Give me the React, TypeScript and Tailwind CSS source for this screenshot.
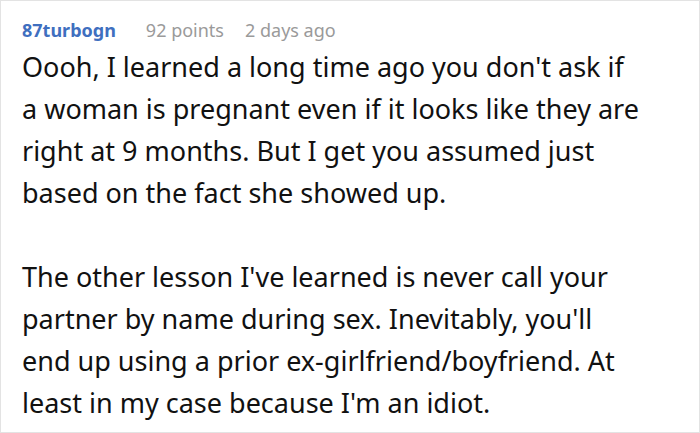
export default function App() {
  return (
    <div className="w-[700px] h-[433px] bg-white border border-[#e3e3e3] overflow-hidden" style={{ fontFamily: '"Noto Sans", sans-serif' }}>
      <div className="pl-[21px] pt-[15px]">
        <div className="flex items-baseline text-[18px] leading-[28px]">
          <span className="font-bold text-[#3f6fbf]">87turbogn</span>
          <span className="ml-[30px] text-[#9a9a9a]">92 points</span>
          <span className="ml-[21px] text-[#9a9a9a]">2 days ago</span>
        </div>
        <div className="text-[27px] leading-[42px] text-[#111] mt-[1.5px]">
          <p>Oooh, I learned a long time ago you don't ask if<br />a woman is pregnant even if it looks like they are<br />right at 9 months. But I get you assumed just<br />based on the fact she showed up.</p>
          <p className="mt-[42px]">The other lesson I've learned is never call your<br />partner by name during sex. Inevitably, you'll<br />end up using a prior ex-girlfriend/boyfriend. At<br />least in my case because I'm an idiot.</p>
        </div>
      </div>
    </div>
  );
}
